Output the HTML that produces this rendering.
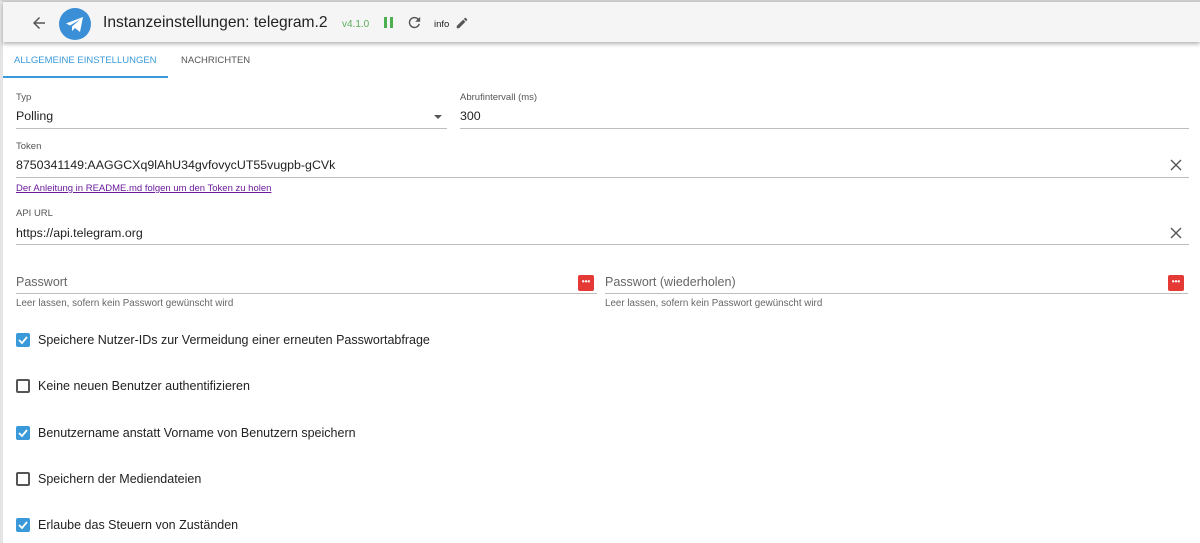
<!DOCTYPE html>
<html><head><meta charset="utf-8"><style>
*{box-sizing:border-box;margin:0;padding:0}
body{width:1200px;height:543px;overflow:hidden;background:#fff;font-family:"Liberation Sans",Arial,sans-serif;color:#222;position:relative}
.frame{position:absolute;left:0;top:0;width:1200px;height:543px;border-top:2px solid #cfcfcf;border-left:3px solid #e4e4e4}
.hdr{position:absolute;left:3px;top:2px;width:1197px;height:40px;background:#f5f5f5;box-shadow:0 2px 4px rgba(0,0,0,.3)}
.abs{position:absolute}
.lbl{position:absolute;font-size:9.5px;color:#555}
.val{position:absolute;font-size:12.4px;color:#222}
.line{position:absolute;height:1px;background:#bdbdbd}
.help{position:absolute;font-size:9.8px;color:#666}
.cb{position:absolute;left:16px;width:14px;height:14px;border-radius:2px}
.cb.on{background:#3a9ad9}
.cb.off{border:2px solid #555}
.cbt{position:absolute;left:38px;font-size:12.5px;color:#222}
.key{position:absolute;width:16px;height:16px;background:#e53935;border-radius:2px;color:#fff;font-size:8px;line-height:14px;text-align:center;font-weight:bold}
</style></head><body>
<div class="frame"></div>
<div class="hdr"></div>
<svg class="abs" style="left:30px;top:14px" width="18" height="18" viewBox="0 0 24 24"><path d="M20 11H7.8l5.6-5.6L12 4l-8 8 8 8 1.4-1.4L7.8 13H20z" fill="#555"/></svg>
<svg class="abs" style="left:59px;top:8px" width="32" height="32" viewBox="0 0 32 32"><circle cx="16" cy="16" r="16" fill="#3a8fd6"/><path d="M7 15.5l17-6.5-3 15-5-4-3 3v-4.5l8-7-10 6z" fill="#fff"/></svg>
<div class="abs" style="left:103px;top:14px;font-size:15.6px;color:#222">Instanzeinstellungen: telegram.2</div>
<div class="abs" style="left:342px;top:19px;font-size:10px;color:#5cae5c">v4.1.0</div>
<div class="abs" style="left:384px;top:17px;width:3px;height:11px;background:#4caf50"></div>
<div class="abs" style="left:390px;top:17px;width:3px;height:11px;background:#4caf50"></div>
<svg class="abs" style="left:406px;top:14px" width="17" height="17" viewBox="0 0 24 24"><path d="M17.6 6.4A8 8 0 1 0 19.7 14h-2.1a6 6 0 1 1-1.4-6.2L13 11h7V4z" fill="#555"/></svg>
<div class="abs" style="left:434px;top:19px;font-size:9.5px;color:#222">info</div>
<svg class="abs" style="left:455px;top:16px" width="14" height="14" viewBox="0 0 24 24"><path d="M3 17.2V21h3.8L17.8 10l-3.8-3.8zM20.7 7c.4-.4.4-1 0-1.4l-2.3-2.3c-.4-.4-1-.4-1.4 0l-1.8 1.8 3.8 3.8z" fill="#555"/></svg>

<div class="abs" style="left:14px;top:55px;font-size:9.5px;color:#3a9ad9">ALLGEMEINE EINSTELLUNGEN</div>
<div class="abs" style="left:181px;top:55px;font-size:9.5px;color:#555">NACHRICHTEN</div>
<div class="abs" style="left:3px;top:76px;width:165px;height:2px;background:#3a9ad9"></div>

<div class="lbl" style="left:16px;top:92px">Typ</div>
<div class="val" style="left:16px;top:109px">Polling</div>
<div class="abs" style="left:434px;top:115px;border-left:4px solid transparent;border-right:4px solid transparent;border-top:4px solid #555"></div>
<div class="line" style="left:16px;top:128px;width:431px"></div>
<div class="lbl" style="left:460px;top:92px">Abrufintervall (ms)</div>
<div class="val" style="left:460px;top:109px">300</div>
<div class="line" style="left:460px;top:128px;width:729px"></div>

<div class="lbl" style="left:16px;top:141px">Token</div>
<div class="val" style="left:16px;top:158px">8750341149:AAGGCXq9lAhU34gvfovycUT55vugpb-gCVk</div>
<svg class="abs" style="left:1170px;top:159px" width="12" height="12" viewBox="0 0 12 12"><path d="M1 1l10 10M11 1L1 11" stroke="#555" stroke-width="1.4"/></svg>
<div class="line" style="left:16px;top:177px;width:1173px"></div>
<div class="abs" style="left:16px;top:183px;font-size:9.5px;color:#6a1b9a;text-decoration:underline">Der Anleitung in README.md folgen um den Token zu holen</div>

<div class="lbl" style="left:16px;top:208px">API URL</div>
<div class="val" style="left:16px;top:226px">https://api.telegram.org</div>
<svg class="abs" style="left:1170px;top:227px" width="12" height="12" viewBox="0 0 12 12"><path d="M1 1l10 10M11 1L1 11" stroke="#555" stroke-width="1.4"/></svg>
<div class="line" style="left:16px;top:244px;width:1173px"></div>

<div class="abs" style="left:16px;top:275px;font-size:12.5px;color:#666">Passwort</div>
<div class="key" style="left:578px;top:275px">•••</div>
<div class="line" style="left:16px;top:293px;width:581px"></div>
<div class="help" style="left:16px;top:298px">Leer lassen, sofern kein Passwort gewünscht wird</div>
<div class="abs" style="left:605px;top:275px;font-size:12.5px;color:#666">Passwort (wiederholen)</div>
<div class="key" style="left:1168px;top:275px">•••</div>
<div class="line" style="left:605px;top:293px;width:583px"></div>
<div class="help" style="left:605px;top:298px">Leer lassen, sofern kein Passwort gewünscht wird</div>

<div class="cb on" style="top:333px"></div><svg class="abs" style="left:16px;top:333px" width="14" height="14" viewBox="0 0 14 14"><path d="M3 7l3 3 5-6" stroke="#fff" stroke-width="1.8" fill="none"/></svg>
<div class="cbt" style="top:333px">Speichere Nutzer-IDs zur Vermeidung einer erneuten Passwortabfrage</div>
<div class="cb off" style="top:379px"></div>
<div class="cbt" style="top:379px">Keine neuen Benutzer authentifizieren</div>
<div class="cb on" style="top:426px"></div><svg class="abs" style="left:16px;top:426px" width="14" height="14" viewBox="0 0 14 14"><path d="M3 7l3 3 5-6" stroke="#fff" stroke-width="1.8" fill="none"/></svg>
<div class="cbt" style="top:426px">Benutzername anstatt Vorname von Benutzern speichern</div>
<div class="cb off" style="top:472px"></div>
<div class="cbt" style="top:472px">Speichern der Mediendateien</div>
<div class="cb on" style="top:518px"></div><svg class="abs" style="left:16px;top:518px" width="14" height="14" viewBox="0 0 14 14"><path d="M3 7l3 3 5-6" stroke="#fff" stroke-width="1.8" fill="none"/></svg>
<div class="cbt" style="top:518px">Erlaube das Steuern von Zuständen</div>
</body></html>
